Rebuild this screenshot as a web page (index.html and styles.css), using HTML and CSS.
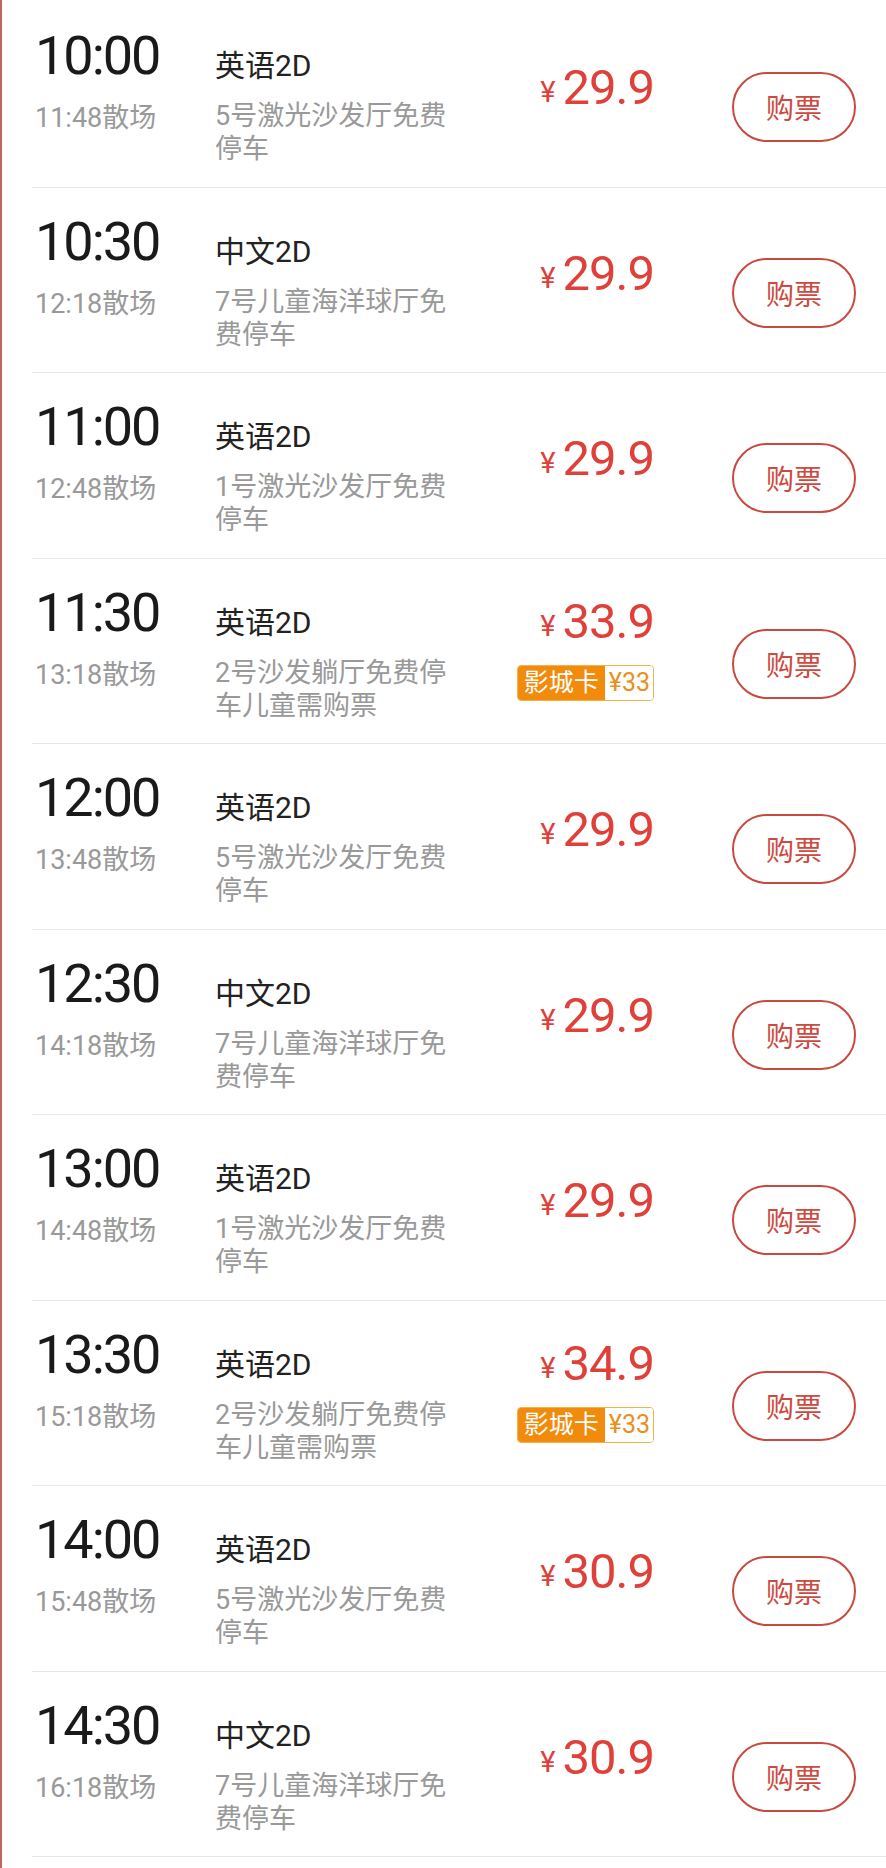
FILE: index.html
```html
<!DOCTYPE html>
<html lang="zh-CN">
<head>
  <meta charset="UTF-8">
  <meta name="viewport" content="width=device-width, initial-scale=1.0">
  <title>场次</title>
  <link rel="stylesheet" href="styles.css">
</head>
<body>
  <div class="page">
    <div class="show">
      <div class="when"><div class="start">10:00</div><div class="end">11:48散场</div></div>
      <div class="film"><div class="lang">英语2D</div><div class="hall">5号激光沙发厅免费停车</div></div>
      <div class="price"><div class="amount"><span class="yen">¥</span>29.9</div></div>
      <button class="buy">购票</button>
    </div>
    <div class="show">
      <div class="when"><div class="start">10:30</div><div class="end">12:18散场</div></div>
      <div class="film"><div class="lang">中文2D</div><div class="hall">7号儿童海洋球厅免费停车</div></div>
      <div class="price"><div class="amount"><span class="yen">¥</span>29.9</div></div>
      <button class="buy">购票</button>
    </div>
    <div class="show">
      <div class="when"><div class="start">11:00</div><div class="end">12:48散场</div></div>
      <div class="film"><div class="lang">英语2D</div><div class="hall">1号激光沙发厅免费停车</div></div>
      <div class="price"><div class="amount"><span class="yen">¥</span>29.9</div></div>
      <button class="buy">购票</button>
    </div>
    <div class="show">
      <div class="when"><div class="start">11:30</div><div class="end">13:18散场</div></div>
      <div class="film"><div class="lang">英语2D</div><div class="hall">2号沙发躺厅免费停车儿童需购票</div></div>
      <div class="price with-card">
        <div class="amount"><span class="yen">¥</span>33.9</div>
        <div class="card"><span class="card-name">影城卡</span><span class="card-price">¥33</span></div>
      </div>
      <button class="buy">购票</button>
    </div>
    <div class="show">
      <div class="when"><div class="start">12:00</div><div class="end">13:48散场</div></div>
      <div class="film"><div class="lang">英语2D</div><div class="hall">5号激光沙发厅免费停车</div></div>
      <div class="price"><div class="amount"><span class="yen">¥</span>29.9</div></div>
      <button class="buy">购票</button>
    </div>
    <div class="show">
      <div class="when"><div class="start">12:30</div><div class="end">14:18散场</div></div>
      <div class="film"><div class="lang">中文2D</div><div class="hall">7号儿童海洋球厅免费停车</div></div>
      <div class="price"><div class="amount"><span class="yen">¥</span>29.9</div></div>
      <button class="buy">购票</button>
    </div>
    <div class="show">
      <div class="when"><div class="start">13:00</div><div class="end">14:48散场</div></div>
      <div class="film"><div class="lang">英语2D</div><div class="hall">1号激光沙发厅免费停车</div></div>
      <div class="price"><div class="amount"><span class="yen">¥</span>29.9</div></div>
      <button class="buy">购票</button>
    </div>
    <div class="show">
      <div class="when"><div class="start">13:30</div><div class="end">15:18散场</div></div>
      <div class="film"><div class="lang">英语2D</div><div class="hall">2号沙发躺厅免费停车儿童需购票</div></div>
      <div class="price with-card">
        <div class="amount"><span class="yen">¥</span>34.9</div>
        <div class="card"><span class="card-name">影城卡</span><span class="card-price">¥33</span></div>
      </div>
      <button class="buy">购票</button>
    </div>
    <div class="show">
      <div class="when"><div class="start">14:00</div><div class="end">15:48散场</div></div>
      <div class="film"><div class="lang">英语2D</div><div class="hall">5号激光沙发厅免费停车</div></div>
      <div class="price"><div class="amount"><span class="yen">¥</span>30.9</div></div>
      <button class="buy">购票</button>
    </div>
    <div class="show">
      <div class="when"><div class="start">14:30</div><div class="end">16:18散场</div></div>
      <div class="film"><div class="lang">中文2D</div><div class="hall">7号儿童海洋球厅免费停车</div></div>
      <div class="price"><div class="amount"><span class="yen">¥</span>30.9</div></div>
      <button class="buy">购票</button>
    </div>
  </div>
</body>
</html>
```

FILE: styles.css
```css
* {
  box-sizing: border-box;
}

body {
  margin: 0;
  background: #fff;
  font-family: Roboto, "Noto Sans CJK SC", sans-serif;
}

.page {
  min-height: 1868px;
  padding-top: 2px;
  border-left: 2px solid #b9675f;
}

.show {
  display: flex;
  height: 185.5px;
  margin-left: 30px;
  padding: 0 30px 0 3px;
  border-bottom: 1px solid #e6e6e6;
}

.when {
  width: 180px;
  padding-top: 26px;
}

.start {
  font-size: 54px;
  line-height: 56px;
  letter-spacing: -2px;
  color: #1a1a1a;
}

.end {
  margin-top: 18px;
  font-size: 27px;
  line-height: 33px;
  color: #999;
}

.film {
  flex: 1;
  padding-top: 44px;
}

.lang {
  font-size: 30px;
  line-height: 40px;
  color: #222;
}

.hall {
  max-width: 245px;
  margin-top: 14px;
  font-size: 27px;
  line-height: 33px;
  color: #999;
}

.price {
  display: flex;
  flex-direction: column;
  align-items: flex-end;
  width: 160px;
  padding-top: 61px;
}

.price.with-card {
  padding-top: 38px;
}

.amount {
  font-size: 49px;
  line-height: 50px;
  letter-spacing: -1px;
  color: #e0403a;
}

.yen {
  margin-right: 8px;
  font-size: 29px;
  position: relative;
  top: -2px;
}

.card {
  display: flex;
  height: 36px;
  margin-top: 12px;
  border: 1.5px solid #f2b34a;
  border-radius: 4px;
  overflow: hidden;
  font-size: 25px;
  line-height: 33px;
}

.card-name {
  padding: 0 6px;
  background: #f28a0c;
  color: #fff;
}

.card-price {
  padding: 0 3px 0 4px;
  background: #fff;
  color: #e8901a;
}

.buy {
  width: 124px;
  height: 70px;
  margin: 70px 0 0 78px;
  padding: 0;
  border: 2px solid #c9483f;
  border-radius: 35px;
  background: #fff;
  font-family: "Noto Sans CJK SC", sans-serif;
  font-size: 28px;
  color: #cc4a40;
}
```
